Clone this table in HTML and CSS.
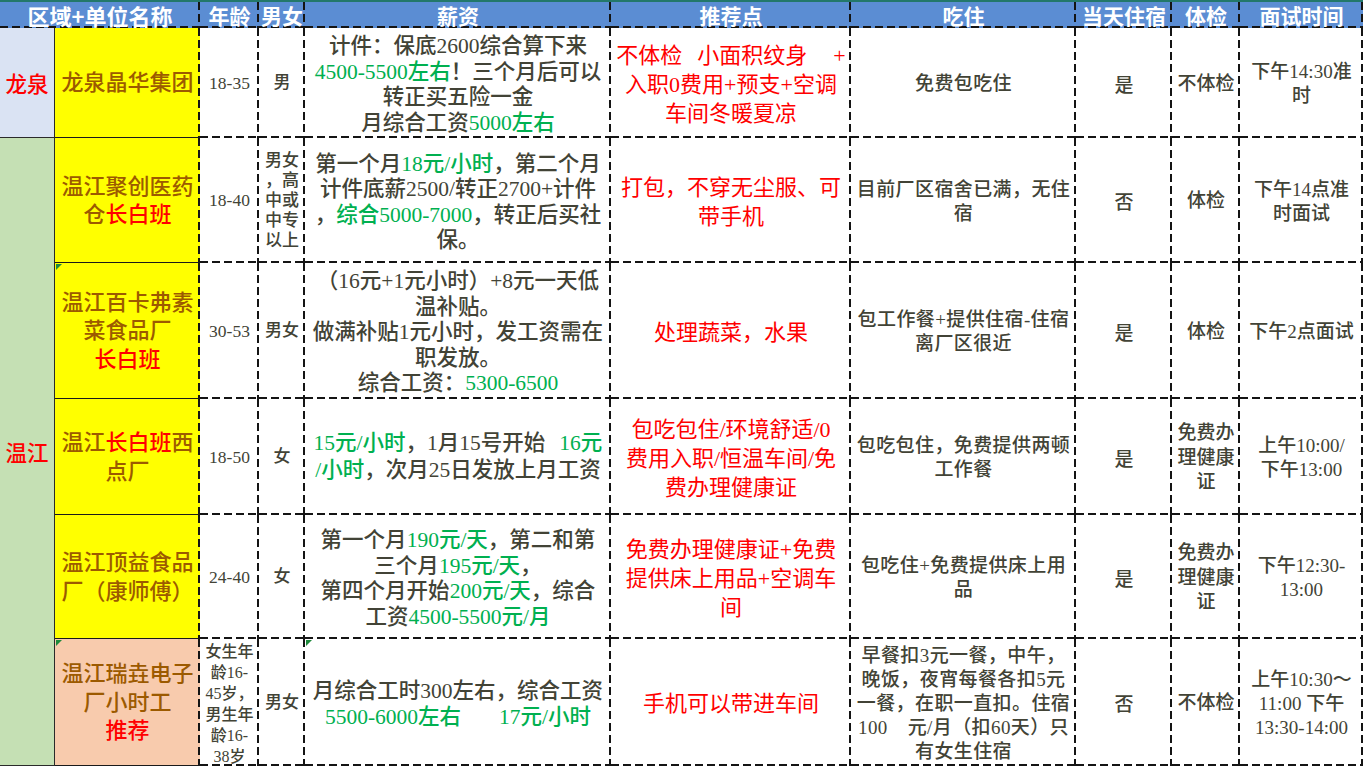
FILE: index.html
```html
<!DOCTYPE html>
<html lang="zh-CN">
<head>
<meta charset="utf-8">
<title>招聘信息表</title>
<link rel="stylesheet" href="styles.css">
</head>
<body>
<div class="sheet">
  <div class="cell h h-wide"><span class="t">区域+单位名称</span></div>
  <div class="cell h"><span class="t">年龄</span></div>
  <div class="cell h"><span class="t">男女</span></div>
  <div class="cell h"><span class="t">薪资</span></div>
  <div class="cell h"><span class="t">推荐点</span></div>
  <div class="cell h"><span class="t">吃住</span></div>
  <div class="cell h"><span class="t">当天住宿</span></div>
  <div class="cell h"><span class="t">体检</span></div>
  <div class="cell h"><span class="t">面试时间</span></div>

  <!-- row 1 -->
  <div class="cell region r-lq"><span class="t">龙泉</span></div>
  <div class="cell co"><span class="t">龙泉晶华集团</span></div>
  <div class="cell d age"><span class="t">18-35</span></div>
  <div class="cell d sex"><span class="t">男</span></div>
  <div class="cell d pay"><span class="t">计件：保底2600综合算下来<br><span class="g">4500-5500左右</span>！三个月后可以<br>转正买五险一金<br>月综合工资<span class="g">5000左右</span></span></div>
  <div class="cell d pt"><span class="t">不体检<span class="sp1"></span>小面积纹身<span class="sp2"></span>+<br>入职0费用+预支+空调<br>车间冬暖夏凉</span></div>
  <div class="cell d eat"><span class="t">免费包吃住</span></div>
  <div class="cell d same"><span class="t">是</span></div>
  <div class="cell d chk"><span class="t">不体检</span></div>
  <div class="cell d time"><span class="t">下午14:30准<br>时</span></div>

  <!-- row 2 -->
  <div class="cell region r-wj"><span class="t">温江</span></div>
  <div class="cell co"><span class="t">温江聚创医药<br>仓<span class="r">长白班</span></span></div>
  <div class="cell d age"><span class="t">18-40</span></div>
  <div class="cell d sex"><span class="t">男女<br>，高<br>中或<br>中专<br>以上</span></div>
  <div class="cell d pay"><span class="t">第一个月<span class="g">18元/小时</span>，第二个月<br>计件底薪2500/转正2700+计件<br>，<span class="g">综合5000-7000</span>，转正后买社<br>保。</span></div>
  <div class="cell d pt"><span class="t">打包，不穿无尘服、可<br>带手机</span></div>
  <div class="cell d eat"><span class="t">目前厂区宿舍已满，无住<br>宿</span></div>
  <div class="cell d same"><span class="t">否</span></div>
  <div class="cell d chk"><span class="t">体检</span></div>
  <div class="cell d time"><span class="t">下午14点准<br>时面试</span></div>

  <!-- row 3 -->
  <div class="cell co tri"><span class="t">温江百卡弗素<br>菜食品厂<br><span class="r">长白班</span></span></div>
  <div class="cell d age"><span class="t">30-53</span></div>
  <div class="cell d sex"><span class="t">男女</span></div>
  <div class="cell d pay"><span class="t">（16元+1元小时）+8元一天低<br>温补贴。<br>做满补贴1元小时，发工资需在<br>职发放。<br>综合工资：<span class="g">5300-6500</span></span></div>
  <div class="cell d pt"><span class="t">处理蔬菜，水果</span></div>
  <div class="cell d eat"><span class="t">包工作餐+提供住宿-住宿<br>离厂区很近</span></div>
  <div class="cell d same"><span class="t">是</span></div>
  <div class="cell d chk"><span class="t">体检</span></div>
  <div class="cell d time"><span class="t">下午2点面试</span></div>

  <!-- row 4 -->
  <div class="cell co"><span class="t">温江<span class="r">长白班</span>西<br>点厂</span></div>
  <div class="cell d age"><span class="t">18-50</span></div>
  <div class="cell d sex"><span class="t">女</span></div>
  <div class="cell d pay pay2"><span class="t"><span class="g">15元/小时</span>，1月15号开始<span class="sp3"></span><span class="g">16元</span><br><span class="g">/小时</span>，次月25日发放上月工资</span></div>
  <div class="cell d pt"><span class="t">包吃包住/环境舒适/0<br>费用入职/恒温车间/免<br>费办理健康证</span></div>
  <div class="cell d eat"><span class="t">包吃包住，免费提供两顿<br>工作餐</span></div>
  <div class="cell d same"><span class="t">是</span></div>
  <div class="cell d chk"><span class="t">免费办<br>理健康<br>证</span></div>
  <div class="cell d time"><span class="t">上午10:00/<br>下午13:00</span></div>

  <!-- row 5 -->
  <div class="cell co"><span class="t">温江顶益食品<br>厂（康师傅）</span></div>
  <div class="cell d age"><span class="t">24-40</span></div>
  <div class="cell d sex"><span class="t">女</span></div>
  <div class="cell d pay"><span class="t">第一个月<span class="g">190元/天</span>，第二和第<br>三个月<span class="g">195元/天</span>，<br>第四个月开始<span class="g">200元/天</span>，综合<br>工资<span class="g">4500-5500元/月</span></span></div>
  <div class="cell d pt"><span class="t">免费办理健康证+免费<br>提供床上用品+空调车<br>间</span></div>
  <div class="cell d eat"><span class="t">包吃住+免费提供床上用<br>品</span></div>
  <div class="cell d same"><span class="t">是</span></div>
  <div class="cell d chk"><span class="t">免费办<br>理健康<br>证</span></div>
  <div class="cell d time"><span class="t">下午12:30-<br>13:00</span></div>

  <!-- row 6 -->
  <div class="cell co peach tri"><span class="t">温江瑞垚电子<br>厂小时工<br><span class="r">推荐</span></span></div>
  <div class="cell d age age6"><span class="t">女生年<br>龄16-<br>45岁，<br>男生年<br>龄16-<br>38岁</span></div>
  <div class="cell d sex"><span class="t">男女</span></div>
  <div class="cell d pay tri"><span class="t">月综合工时300左右，综合工资<br><span class="g">5500-6000左右<span class="sp4"></span>17元/小时</span></span></div>
  <div class="cell d pt"><span class="t">手机可以带进车间</span></div>
  <div class="cell d eat"><span class="t">早餐扣3元一餐，中午，<br>晚饭，夜宵每餐各扣5元<br>一餐，在职一直扣。住宿<br>100<span class="sp5"></span>元/月（扣60天）只<br>有女生住宿</span></div>
  <div class="cell d same"><span class="t">否</span></div>
  <div class="cell d chk"><span class="t">不体检</span></div>
  <div class="cell d time"><span class="t">上午10:30～<br>11:00 下午<br>13:30-14:00</span></div>
</div>
</body>
</html>
```

FILE: styles.css
```css
html, body {
  margin: 0;
  padding: 0;
  background: #ffffff;
}

body {
  font-family: "Liberation Serif", "Noto Sans CJK SC", serif;
  color: #424336;
}

.sheet {
  display: grid;
  grid-template-columns: 55px 145px 59px 46px 306px 240px 225px 96px 68px 123px;
  grid-template-rows: 26px 110px 125px 136px 116px 124px 127px;
  width: 1363px;
  border-top: 2px solid #23786a;
}

.cell {
  box-sizing: border-box;
  display: flex;
  align-items: center;
  justify-content: center;
  text-align: center;
  white-space: nowrap;
  position: relative;
  font-weight: 500;
}

.t {
  display: block;
}

/* dashed borders drawn like the spreadsheet grid (8px dash, 4px gap) */
.d,
.h {
  background-image:
    linear-gradient(to bottom, #141414 0, #141414 8px, transparent 8px),
    linear-gradient(to right, #141414 0, #141414 8px, transparent 8px);
  background-size: 2px 12px, 12px 2px;
  background-position: right top, left bottom;
  background-repeat: repeat-y, repeat-x;
}

.h {
  background-color: #5b8dd3;
  color: #ffffff;
  font-family: "Noto Sans CJK SC", sans-serif;
  font-weight: 700;
  font-size: 21px;
  line-height: 26px;
}

.h-wide {
  grid-column: span 2;
  font-size: 22px;
}

.region {
  grid-column: 1;
  color: #ff0000;
  font-size: 21.5px;
  border-right: 1px solid #2a2a2a;
  border-bottom: 1px solid #2a2a2a;
}

.r-lq {
  background: #dae3f3;
}

.r-wj {
  grid-row: span 5;
  background: #c5e0b4;
}

.co {
  grid-column: 2;
  background-color: #ffff00;
  color: #9c5a00;
  font-size: 22px;
  line-height: 28.5px;
  padding-top: 2px;
  border-bottom: 1px solid #1a1a1a;
  background-image: linear-gradient(to bottom, #141414 0, #141414 8px, transparent 8px);
  background-size: 2px 12px;
  background-position: right top;
  background-repeat: repeat-y;
}

.peach {
  background-color: #f8cbad;
}

.r {
  color: #ff0000;
}

.g {
  color: #00b050;
}

.age {
  font-size: 17.5px;
  line-height: 21px;
}

.age6 {
  font-size: 16px;
  line-height: 21px;
  padding-top: 3px;
}

.sex {
  font-size: 17px;
  line-height: 20px;
}

.pay {
  font-size: 21.5px;
  line-height: 25.5px;
  padding-top: 4px;
}

.pay2 {
  line-height: 27px;
  padding-top: 0;
}

.pt {
  color: #ff0000;
  font-size: 22px;
  line-height: 29px;
  font-weight: 400;
  padding-top: 2px;
}

.eat {
  font-size: 19px;
  line-height: 24px;
  letter-spacing: 0.4px;
  padding-top: 2px;
}

.same {
  font-size: 19px;
}

.chk {
  font-size: 19px;
  line-height: 24.5px;
  padding-top: 2px;
}

.time {
  font-size: 19px;
  line-height: 24px;
  padding-top: 2px;
}

.sp1 { display: inline-block; width: 15px; }
.sp2 { display: inline-block; width: 26px; }
.sp3 { display: inline-block; width: 14px; }
.sp4 { display: inline-block; width: 38px; }
.sp5 { display: inline-block; width: 20px; }

.tri::before {
  content: "";
  position: absolute;
  left: 1px;
  top: 1px;
  border-top: 6px solid #1f8a3c;
  border-right: 6px solid transparent;
}
```
